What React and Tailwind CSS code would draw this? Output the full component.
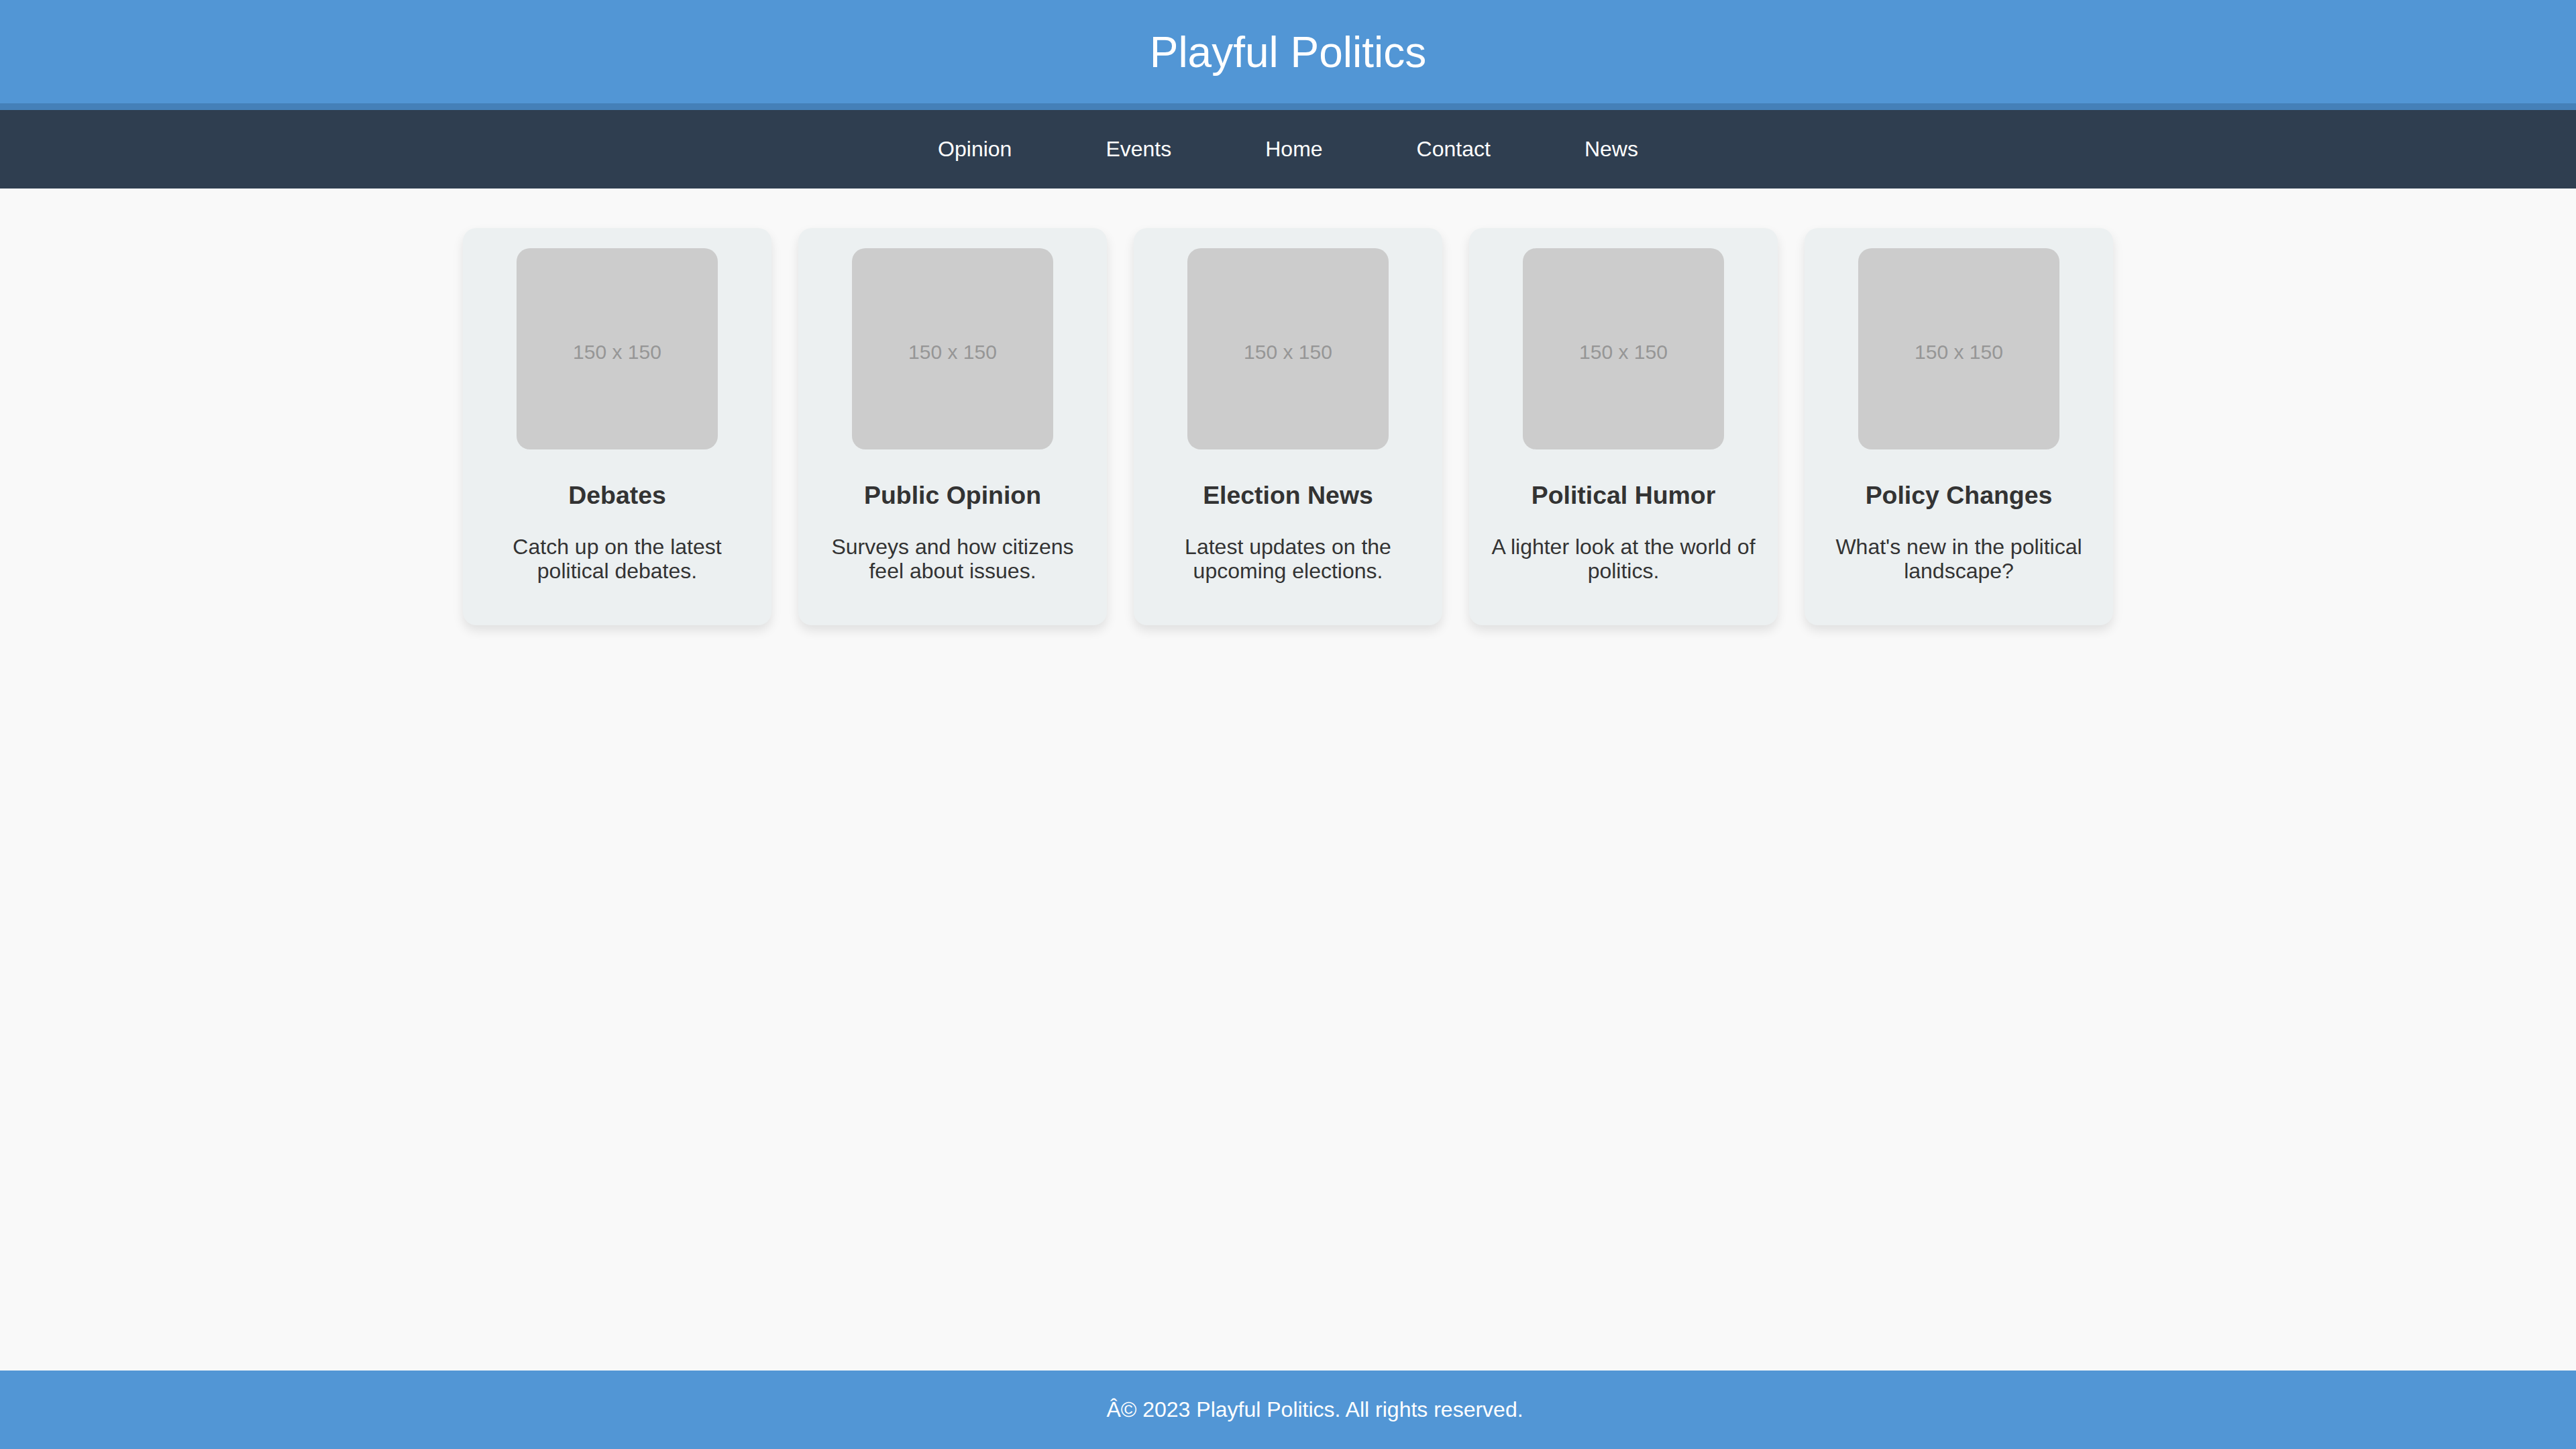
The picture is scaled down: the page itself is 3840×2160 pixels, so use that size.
const LINKS = ['Opinion', 'Events', 'Home', 'Contact', 'News']

const CARDS = [
  { titulo: 'Debates', texto: 'Catch up on the latest political debates.' },
  { titulo: 'Public Opinion', texto: 'Surveys and how citizens feel about issues.' },
  { titulo: 'Election News', texto: 'Latest updates on the upcoming elections.' },
  { titulo: 'Political Humor', texto: 'A lighter look at the world of politics.' },
  { titulo: 'Policy Changes', texto: "What's new in the political landscape?" },
]

function Card({ titulo, texto }) {
  return (
    <div className="w-[460px] bg-[#ecf0f1] rounded-[20px] p-[30px] text-center shadow-[0_8px_16px_rgba(0,0,0,0.1)]">
      <div className="w-[300px] h-[300px] mx-auto rounded-[20px] bg-[#cccccc] flex items-center justify-center pt-[9px] text-[#969696] text-[30px]">
        150 x 150
      </div>
      <h3 className="mt-[47px] mb-[37px] text-[37.44px] leading-[43px] font-bold text-[#333333]">{titulo}</h3>
      <p className="mb-[32px] text-[32px] leading-[36.8px] text-[#333333]">{texto}</p>
    </div>
  )
}

export default function App() {
  return (
    <div className="min-h-screen flex flex-col bg-[#f9f9f9] font-['Liberation_Sans',Arial,sans-serif]">
      <header className="bg-[#5296d5] border-b-[10px] border-[#4580b8] pt-[42px] pb-[38px] text-center">
        <h1 className="text-[64px] leading-[73.6px] text-white font-normal">Playful Politics</h1>
      </header>

      <nav className="bg-[#2f3e50] py-[40px]">
        <ul className="flex justify-center gap-[140px] text-white text-[32px] leading-[37px]">
          {LINKS.map(l => (
            <li key={l}><a href="#">{l}</a></li>
          ))}
        </ul>
      </nav>

      <main className="flex-1 pt-[59px]">
        <div className="flex justify-center gap-[40px]">
          {CARDS.map(c => <Card key={c.titulo} {...c} />)}
        </div>
      </main>

      {/* texto do rodapé fica um pouco à direita do centro na referência */}
      <footer className="bg-[#5296d5] py-[40px] pl-[80px] text-center text-white text-[32px] leading-[37px]">
        Â© 2023 Playful Politics. All rights reserved.
      </footer>
    </div>
  )
}
